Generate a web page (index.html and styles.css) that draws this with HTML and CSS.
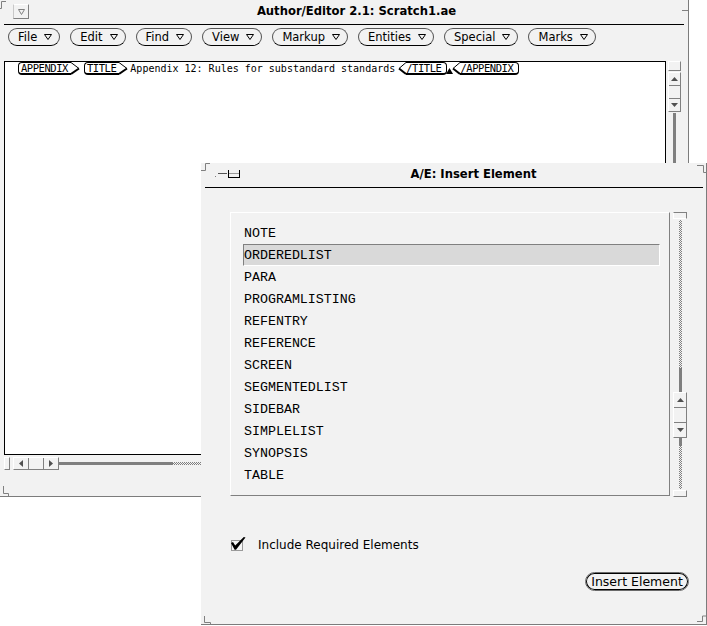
FILE: index.html
```html
<!DOCTYPE html>
<html lang="en">
<head>
<meta charset="utf-8">
<title>Author/Editor 2.1: Scratch1.ae</title>
<link rel="stylesheet" href="styles.css">
</head>
<body>
<div class="win main">
  <svg class="corner main-tl" width="8" height="10"><polyline points="0,8.5 1.5,8.5 1.5,1.5 6,1.5"/></svg>
  <svg class="corner main-tr" width="7" height="12"><polyline points="0,10.5 6,10.5"/></svg>
  <svg class="corner main-bl" width="8" height="10"><polyline points="1.5,0 1.5,7.5 6.5,7.5 6.5,10"/></svg>
  <div class="header">
    <div class="wmenu"><svg width="7" height="6" viewBox="0 0 7 6"><polygon points="0.5,0.5 6.5,0.5 3.5,5.5"/></svg></div>
    <div class="title">Author/Editor 2.1: Scratch1.ae</div>
  </div>
  <div class="menubar">
    <div class="mbtn">File<svg class="tri" width="8" height="6"><polygon points="0.5,0.5 7.5,0.5 4,5.5"/></svg></div>
    <div class="mbtn">Edit<svg class="tri" width="8" height="6"><polygon points="0.5,0.5 7.5,0.5 4,5.5"/></svg></div>
    <div class="mbtn">Find<svg class="tri" width="8" height="6"><polygon points="0.5,0.5 7.5,0.5 4,5.5"/></svg></div>
    <div class="mbtn">View<svg class="tri" width="8" height="6"><polygon points="0.5,0.5 7.5,0.5 4,5.5"/></svg></div>
    <div class="mbtn">Markup<svg class="tri" width="8" height="6"><polygon points="0.5,0.5 7.5,0.5 4,5.5"/></svg></div>
    <div class="mbtn">Entities<svg class="tri" width="8" height="6"><polygon points="0.5,0.5 7.5,0.5 4,5.5"/></svg></div>
    <div class="mbtn">Special<svg class="tri" width="8" height="6"><polygon points="0.5,0.5 7.5,0.5 4,5.5"/></svg></div>
    <div class="mbtn">Marks<svg class="tri" width="8" height="6"><polygon points="0.5,0.5 7.5,0.5 4,5.5"/></svg></div>
  </div>
  <div class="work">
    <div class="pane">
      <div class="line">
        <span class="tag stag"><span class="tname">APPENDIX</span><svg class="chev" width="9" height="13"><path d="M0 0.5 L8 6.5"/><path class="thick" d="M8 6.5 L0 12"/></svg></span>
        <span class="tag stag"><span class="tname">TITLE</span><svg class="chev" width="9" height="13"><path d="M0 0.5 L8 6.5"/><path class="thick" d="M8 6.5 L0 12"/></svg></span>
        <span class="ptext">Appendix 12: Rules for substandard standards</span>
        <span class="tag etag first"><svg class="chev" width="8" height="13"><path d="M8 0.5 L1 6.5"/><path class="thick" d="M1 6.5 L8 12"/></svg><span class="tname">/TITLE</span></span>
        <svg class="caret" width="7" height="6"><polygon points="3.5,0 7,6 0,6"/></svg>
        <span class="tag etag"><svg class="chev" width="8" height="13"><path d="M8 0.5 L1 6.5"/><path class="thick" d="M1 6.5 L8 12"/></svg><span class="tname">/APPENDIX</span></span>
      </div>
    </div>
    <div class="vscroll">
      <div class="anchor-v"></div>
      <div class="elev v">
        <div class="seg"><svg class="arrow" width="7" height="4"><polygon points="3.5,0 7,4 0,4"/></svg></div>
        <div class="seg"></div>
        <div class="seg"><svg class="arrow" width="7" height="4"><polygon points="0,0 7,0 3.5,4"/></svg></div>
      </div>
      <div class="cable-dark vcable"></div>
    </div>
    <div class="hscroll">
      <div class="anchor-h"></div>
      <div class="elev h">
        <div class="seg"><svg class="arrow" width="4" height="7"><polygon points="0,3.5 4,0 4,7"/></svg></div>
        <div class="seg"></div>
        <div class="seg"><svg class="arrow" width="4" height="7"><polygon points="0,0 4,3.5 0,7"/></svg></div>
      </div>
      <div class="cable-dark hcable"></div>
      <div class="stip hstip"></div>
    </div>
  </div>
</div>

<div class="win dialog">
  <svg class="corner d-tl" width="10" height="9"><polyline points="0,7.5 4.5,7.5 4.5,0.5 9,0.5"/></svg>
  <svg class="corner d-tr" width="11" height="10"><polyline points="1,0.5 7.5,0.5 7.5,7.5 11,7.5"/></svg>
  <svg class="corner d-bl" width="9" height="10"><polyline points="1.5,1 1.5,7.5 7.5,7.5 7.5,10"/></svg>
  <svg class="corner d-br" width="11" height="9"><polyline points="1,6.5 6.5,6.5 6.5,1 10,1"/></svg>
  <div class="header dheader">
    <svg class="pin" width="32" height="10">
      <rect x="3" y="7" width="1" height="1" fill="#808080"/>
      <line x1="6" y1="4.5" x2="15" y2="4.5" stroke="#555"/>
      <line x1="16.5" y1="1" x2="16.5" y2="9" stroke="#000"/>
      <line x1="16.5" y1="8.5" x2="28" y2="8.5" stroke="#000"/>
      <line x1="27.5" y1="1" x2="27.5" y2="9" stroke="#000"/>
      <line x1="17" y1="4.5" x2="27" y2="4.5" stroke="#999"/>
    </svg>
    <div class="title">A/E: Insert Element</div>
  </div>
  <div class="listrow">
    <div class="listbox">
      <div class="item">NOTE</div>
      <div class="item sel">ORDEREDLIST</div>
      <div class="item">PARA</div>
      <div class="item">PROGRAMLISTING</div>
      <div class="item">REFENTRY</div>
      <div class="item">REFERENCE</div>
      <div class="item">SCREEN</div>
      <div class="item">SEGMENTEDLIST</div>
      <div class="item">SIDEBAR</div>
      <div class="item">SIMPLELIST</div>
      <div class="item">SYNOPSIS</div>
      <div class="item">TABLE</div>
    </div>
    <div class="dvscroll">
      <div class="danchor top"></div>
      <div class="stip dstip1"></div>
      <div class="cable-dark dark1"></div>
      <div class="elev dv">
        <div class="seg"><svg class="arrow" width="7" height="4"><polygon points="3.5,0 7,4 0,4"/></svg></div>
        <div class="seg"></div>
        <div class="seg"><svg class="arrow" width="7" height="4"><polygon points="0,0 7,0 3.5,4"/></svg></div>
      </div>
      <div class="cable-dark dark2"></div>
      <div class="stip dstip2"></div>
      <div class="danchor bottom"></div>
    </div>
  </div>
  <div class="checkrow">
    <svg class="check" width="15" height="15">
      <rect x="0.5" y="3.5" width="11" height="10" fill="#f6f6f6" stroke="#9a9a9a"/>
      <polygon points="0,6 2,5 4.2,8.5 12.8,0 14.5,0.6 5,12.8 3.6,12.8" fill="#000"/>
    </svg>
    <span class="clabel">Include Required Elements</span>
  </div>
  <div class="btnrow">
    <div class="dbtn">Insert Element</div>
  </div>
</div>
</body>
</html>
```
FILE: styles.css
```css
* { box-sizing: border-box; }
html, body { margin: 0; padding: 0; }
body {
  background: #fff;
  width: 707px;
  height: 626px;
  position: relative;
  overflow: hidden;
  font-family: "DejaVu Sans", "Liberation Sans", sans-serif;
  color: #000;
}

.win {
  position: absolute;
  background: #f2f2f2;
  display: flex;
  flex-direction: column;
}
.main {
  left: 0; top: 0;
  width: 689px; height: 497px;
  border-right: 1px solid #7c7c7c;
  border-bottom: 1px solid #7c7c7c;
}
.dialog {
  left: 201px; top: 163px;
  width: 506px; height: 462px;
  border-right: 1px solid #7c7c7c;
  border-bottom: 1px solid #7c7c7c;
}

.corner { position: absolute; fill: none; stroke: #808080; stroke-width: 1; }
.main-tl { left: 0; top: 0; }
.main-tr { left: 682px; top: 0; }
.main-bl { left: 2px; top: 486px; }
.d-tl { left: 0; top: 0; }
.d-tr { left: 495px; top: 2px; }
.d-bl { left: 2px; top: 452px; }
.d-br { left: 495px; top: 452px; }

.header {
  display: flex;
  height: 25px;
  margin: 0 4px;
  border-bottom: 1px solid #000;
  flex: none;
}
.dheader { margin: 0 3px 0 4px; }
.wmenu {
  width: 16px; height: 15px;
  margin: 4px 0 0 9px;
  border: 1px solid;
  border-color: #fff #808080 #808080 #c8c8c8;
  display: flex; align-items: center; justify-content: center;
}
.wmenu svg { fill: none; stroke: #808080; }
.title {
  flex: 1;
  text-align: center;
  font-weight: bold;
  font-size: 11.6px;
  line-height: 17px;
  margin-top: 3px;
  white-space: nowrap;
}
.pin { margin: 6px 0 0 7px; flex: none; }

.menubar {
  display: flex;
  gap: 10px;
  margin-top: 3px;
  padding-left: 8px;
  height: 18px;
  flex: none;
}
.mbtn {
  height: 18px;
  display: flex; align-items: center; gap: 7px;
  padding: 0 7px 0 9px;
  border: 1px solid #555;
  border-bottom-color: #000;
  border-radius: 9px;
  font-size: 11.5px;
  white-space: nowrap;
}
.tri { fill: none; stroke: #000; stroke-width: 1; }

.work {
  display: grid;
  grid-template-columns: 662px 13px;
  grid-template-rows: 394px 13px;
  column-gap: 2px;
  row-gap: 2px;
  margin: 15px 0 0 4px;
}
.pane {
  background: #fff;
  border: 1px solid #000;
  padding: 0 0 0 13px;
  font-family: "DejaVu Sans Mono", monospace;
  font-size: 10px;
}
.line { display: flex; align-items: flex-start; height: 13px; }
.tag { display: flex; height: 13px; flex: none; }
.tname {
  height: 13px;
  border-top: 1px solid #000;
  border-bottom: 2px solid #000;
  font-size: 10.5px;
  line-height: 10px;
  letter-spacing: -0.45px;
  white-space: nowrap;
}
.stag .tname {
  border-left: 1px solid #000;
  border-radius: 4px 0 0 4px;
  padding: 0 3px 0 2px;
}
.etag .tname {
  border-right: 1px solid #000;
  border-radius: 0 4px 4px 0;
  padding: 0 5px 0 0;
}
.stag + .stag { margin-left: 4px; }
.chev { flex: none; fill: none; stroke: #000; stroke-width: 1; }
.chev .thick { stroke-width: 2; }
.ptext { line-height: 13px; margin-left: 2px; white-space: pre; }
.etag.first { margin-left: 3px; }
.caret { flex: none; align-self: flex-end; margin: 0 -1px 1px; fill: #000; }

.arrow { fill: #505050; }
.cable-dark { background: #7f7f7f; flex: none; }
.stip {
  background: repeating-conic-gradient(#808080 0% 25%, #f2f2f2 0% 50%) 0 0 / 2px 2px;
  flex: none;
}

.vscroll { display: flex; flex-direction: column; align-items: center; }
.anchor-v {
  width: 13px; height: 10px; flex: none;
  border: 1px solid;
  border-color: #fff #808080 #808080 #fff;
}
.elev {
  flex: none;
  display: flex;
  border: 1px solid;
  border-color: #fff #808080 #808080 #fff;
}
.elev .seg { flex: 1; display: flex; align-items: center; justify-content: center; }
.elev.v { flex-direction: column; width: 13px; height: 40px; margin-top: 1px; }
.elev.v .seg + .seg, .elev.dv .seg + .seg { border-top: 1px solid #808080; }
.vcable { width: 3px; flex: 1; margin-top: 1px; }

.hscroll { display: flex; align-items: center; }
.anchor-h {
  width: 6px; height: 13px; flex: none;
  border: 1px solid;
  border-color: #fff #808080 #808080 #fff;
}
.elev.h { width: 46px; height: 13px; margin-left: 3px; }
.elev.h .seg + .seg { border-left: 1px solid #808080; }
.hcable { width: 114px; height: 3px; }
.hstip { flex: 1; height: 3px; }

.listrow {
  display: flex;
  gap: 3px;
  margin: 24px 0 0 29px;
  height: 285px;
  align-items: flex-start;
  flex: none;
}
.listbox {
  width: 440px; height: 284px;
  border: 1px solid;
  border-color: #fff #808080 #808080 #fff;
  padding: 9px 9px 0 12px;
  font-family: "Liberation Mono", monospace;
  font-size: 13.3px;
}
.item { height: 22px; line-height: 23px; padding-left: 1px; white-space: pre; }
.item.sel {
  background: #d9d9d9;
  border: 1px solid;
  border-color: #808080 #fff #fff #808080;
  padding-left: 0;
  line-height: 21px;
}

.dvscroll {
  width: 14px; height: 285px;
  display: flex; flex-direction: column; align-items: center;
}
.danchor { width: 14px; height: 7px; flex: none; border: 1px solid; }
.danchor.top { border-color: #808080 #808080 #fff #fff; }
.danchor.bottom { border-color: #fff #808080 #808080 #fff; margin-top: 1px; }
.dstip1 { width: 3px; height: 148px; margin-top: 1px; }
.dark1 { width: 3px; height: 24px; }
.elev.dv { width: 14px; height: 46px; flex-direction: column; }
.dark2 { width: 3px; height: 8px; }
.dstip2 { width: 3px; flex: 1; }

.checkrow {
  display: flex;
  align-items: center;
  gap: 12px;
  margin: 40px 0 0 30px;
  height: 15px;
  font-size: 12px;
  flex: none;
}
.check { flex: none; }
.clabel { white-space: nowrap; }

.btnrow {
  display: flex;
  justify-content: flex-end;
  margin-top: 20px;
  padding-right: 17px;
  flex: none;
}
.dbtn {
  width: 104px; height: 19px;
  border: 1px solid #6a6a6a;
  border-radius: 10px;
  box-shadow: inset 0 0 0 1px #000;
  display: flex; align-items: center; justify-content: center;
  font-size: 12.5px;
  white-space: nowrap;
}
```
